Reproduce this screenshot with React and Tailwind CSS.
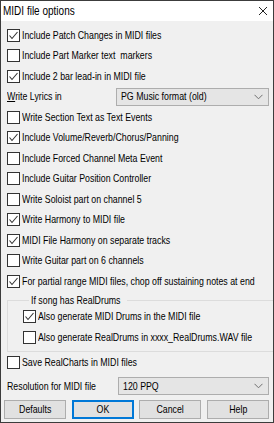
import React from "react";

function T({ children, center }) {
  return (
    <span
      className={
        center
          ? "inline-block whitespace-nowrap origin-center scale-x-[0.8]"
          : "inline-block whitespace-nowrap origin-left scale-x-[0.8]"
      }
    >
      {children}
    </span>
  );
}

function Box({ checked }) {
  return (
    <span className="w-[13px] h-[13px] border border-[#333333] bg-white flex items-center justify-center shrink-0">
      {checked && (
        <svg width="11" height="11" viewBox="0 0 11 11">
          <polyline points="1.5,5.5 4,8.5 9.5,2" fill="none" stroke="#333333" strokeWidth="1.1" />
        </svg>
      )}
    </span>
  );
}

function Row({ checked, children }) {
  return (
    <div className="h-[20.5px] flex items-center gap-[2px]">
      <Box checked={checked} />
      <T>{children}</T>
    </div>
  );
}

function Chevron() {
  return (
    <svg width="9" height="6" viewBox="0 0 9 6">
      <polyline points="0.5,0.8 4.5,4.8 8.5,0.8" fill="none" stroke="#707070" strokeWidth="1" />
    </svg>
  );
}

function Combo({ value }) {
  return (
    <div className="w-[153px] h-[18px] border border-[#adadad] bg-[#e5e5e5] flex items-center justify-between pl-[4px] pr-[5px]">
      <T>{value}</T>
      <Chevron />
    </div>
  );
}

function Btn({ children, primary }) {
  return (
    <div
      className={
        primary
          ? "w-[62px] h-[19px] border-2 border-[#0078d7] bg-[#e1e1e1] flex items-center justify-center"
          : "w-[62px] h-[19px] border border-[#adadad] bg-[#e1e1e1] flex items-center justify-center"
      }
    >
      <T center>{children}</T>
    </div>
  );
}

export default function App() {
  return (
    <div className="w-[274px] h-[423px] border border-[#3c3c3c] bg-[#f0f0f0] flex flex-col text-[11px] leading-none text-black font-['Liberation_Sans',Arial,sans-serif] overflow-hidden">
      <div className="h-[20px] bg-white flex items-center justify-between pl-[2px] pr-[5px] shrink-0">
        <span className="text-[12.5px]">
          <T>MIDI file options</T>
        </span>
        <svg width="10" height="10" viewBox="0 0 10 10">
          <line x1="1" y1="1" x2="9" y2="9" stroke="#222" strokeWidth="1" />
          <line x1="9" y1="1" x2="1" y2="9" stroke="#222" strokeWidth="1" />
        </svg>
      </div>
      <div className="flex flex-col pl-[6px] pr-[4px] pt-[3.75px]">
        <Row checked>Include Patch Changes in MIDI files</Row>
        <Row>Include Part Marker text&nbsp; markers</Row>
        <Row checked>Include 2 bar lead-in in MIDI file</Row>
        <div className="h-[20.5px] flex items-center justify-between">
          <T>
            <span className="underline">W</span>rite Lyrics in
          </T>
          <Combo value="PG Music format (old)" />
        </div>
        <Row>Write Section Text as Text Events</Row>
        <Row checked>Include Volume/Reverb/Chorus/Panning</Row>
        <Row>Include Forced Channel Meta Event</Row>
        <Row>Include Guitar Position Controller</Row>
        <Row>Write Soloist part on channel 5</Row>
        <Row checked>Write Harmony to MIDI file</Row>
        <Row checked>MIDI File Harmony on separate tracks</Row>
        <Row>Write Guitar part on 6 channels</Row>
        <Row checked>For partial range MIDI files, chop off sustaining notes at end</Row>
        <fieldset className="mt-[3px] border border-[#dcdcdc] pl-[15px] pb-[4px]">
          <legend className="ml-[6px] px-[2px] w-[98px] h-[12px] leading-[12px] overflow-visible">
            <T>If song has RealDrums</T>
          </legend>
          <Row checked>Also generate MIDI Drums in the MIDI file</Row>
          <Row>Also generate RealDrums in xxxx_RealDrums.WAV file</Row>
        </fieldset>
        <Row>Save RealCharts in MIDI files</Row>
        <div className="mt-[3px] h-[20.5px] flex items-center justify-between">
          <T>Resolution for MIDI file</T>
          <Combo value="120 PPQ" />
        </div>
        <div className="mt-[4px] flex justify-between -ml-[3px]">
          <Btn>Defaults</Btn>
          <Btn primary>OK</Btn>
          <Btn>Cancel</Btn>
          <Btn>Help</Btn>
        </div>
      </div>
    </div>
  );
}
